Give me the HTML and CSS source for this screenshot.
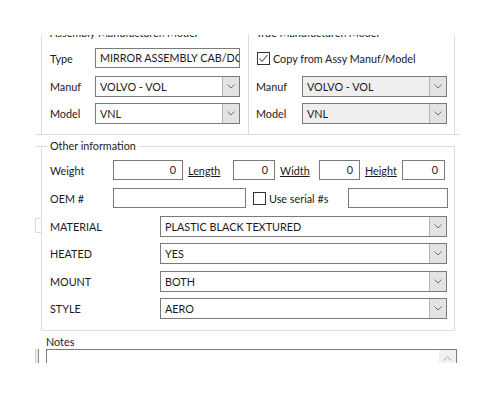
FILE: index.html
```html
<!DOCTYPE html>
<html lang="en">
<head>
    <meta charset="UTF-8">
    <title>Part details</title>
    <link rel="stylesheet" href="styles.css">
</head>
<body>

    <div class="viewport">

        <div class="toprow">
            <div class="group group-assy">
                <span class="group-title">Assembly Manufacturer/Model</span>
                <div class="row row-first">
                    <span class="label">Type</span>
                    <div class="field">MIRROR ASSEMBLY CAB/DOOR MOUNTED</div>
                </div>
                <div class="row row-combo1">
                    <span class="label">Manuf</span>
                    <div class="combo">
                        <span class="combo-value">VOLVO - VOL</span>
                        <span class="combo-btn"><svg width="8" height="5" viewBox="0 0 8 5"><polyline points="0.5,0.5 4,4 7.5,0.5" fill="none" stroke="#707070"/></svg></span>
                    </div>
                </div>
                <div class="row row-combo2">
                    <span class="label">Model</span>
                    <div class="combo">
                        <span class="combo-value">VNL</span>
                        <span class="combo-btn"><svg width="8" height="5" viewBox="0 0 8 5"><polyline points="0.5,0.5 4,4 7.5,0.5" fill="none" stroke="#707070"/></svg></span>
                    </div>
                </div>
            </div>

            <div class="group group-true">
                <span class="group-title">True Manufacturer/Model</span>
                <div class="row row-first">
                    <label class="check">
                        <svg width="13" height="13" viewBox="0 0 13 13"><rect x="0.5" y="0.5" width="12" height="12" fill="#fff" stroke="#333"/><polyline points="2.5,6.5 5,9.5 10.5,3" fill="none" stroke="#333"/></svg>
                        <span>Copy from Assy Manuf/Model</span>
                    </label>
                </div>
                <div class="row row-combo1">
                    <span class="label label-true">Manuf</span>
                    <div class="combo combo-locked">
                        <span class="combo-value">VOLVO - VOL</span>
                        <span class="combo-btn"><svg width="8" height="5" viewBox="0 0 8 5"><polyline points="0.5,0.5 4,4 7.5,0.5" fill="none" stroke="#707070"/></svg></span>
                    </div>
                </div>
                <div class="row row-combo2">
                    <span class="label label-true">Model</span>
                    <div class="combo combo-locked">
                        <span class="combo-value">VNL</span>
                        <span class="combo-btn"><svg width="8" height="5" viewBox="0 0 8 5"><polyline points="0.5,0.5 4,4 7.5,0.5" fill="none" stroke="#707070"/></svg></span>
                    </div>
                </div>
            </div>
        </div>

        <div class="other">
            <div class="gutter">
                <div class="bracket"></div>
            </div>
            <div class="group group-other">
                <span class="group-title">Other information</span>

                <div class="row row-weight">
                    <span class="label label-wide">Weight</span>
                    <div class="field num w-weight">0</div>
                    <span class="link l-length">Length</span>
                    <div class="field num w-length">0</div>
                    <span class="link l-width">Width</span>
                    <div class="field num w-width">0</div>
                    <span class="link l-height">Height</span>
                    <div class="field num w-height">0</div>
                </div>

                <div class="row row-oem">
                    <span class="label label-wide">OEM #</span>
                    <div class="field w-oem"></div>
                    <label class="check serial">
                        <svg width="13" height="13" viewBox="0 0 13 13"><rect x="0.5" y="0.5" width="12" height="12" fill="#fff" stroke="#333"/></svg>
                        <span>Use serial #s</span>
                    </label>
                    <div class="field w-serial"></div>
                </div>

                <div class="row row-attr1">
                    <span class="label label-attr">MATERIAL</span>
                    <div class="combo combo-attr">
                        <span class="combo-value">PLASTIC BLACK TEXTURED</span>
                        <span class="combo-btn"><svg width="8" height="5" viewBox="0 0 8 5"><polyline points="0.5,0.5 4,4 7.5,0.5" fill="none" stroke="#707070"/></svg></span>
                    </div>
                </div>
                <div class="row row-attr">
                    <span class="label label-attr">HEATED</span>
                    <div class="combo combo-attr">
                        <span class="combo-value">YES</span>
                        <span class="combo-btn"><svg width="8" height="5" viewBox="0 0 8 5"><polyline points="0.5,0.5 4,4 7.5,0.5" fill="none" stroke="#707070"/></svg></span>
                    </div>
                </div>
                <div class="row row-attr row-attr3">
                    <span class="label label-attr">MOUNT</span>
                    <div class="combo combo-attr">
                        <span class="combo-value">BOTH</span>
                        <span class="combo-btn"><svg width="8" height="5" viewBox="0 0 8 5"><polyline points="0.5,0.5 4,4 7.5,0.5" fill="none" stroke="#707070"/></svg></span>
                    </div>
                </div>
                <div class="row row-attr">
                    <span class="label label-attr">STYLE</span>
                    <div class="combo combo-attr">
                        <span class="combo-value">AERO</span>
                        <span class="combo-btn"><svg width="8" height="5" viewBox="0 0 8 5"><polyline points="0.5,0.5 4,4 7.5,0.5" fill="none" stroke="#707070"/></svg></span>
                    </div>
                </div>
            </div>
        </div>

        <div class="notes-row">
            <div class="frag"></div>
            <div class="notes">
                <div class="notes-label">Notes</div>
                <div class="notes-box">
                    <span class="scroll-up"><svg width="9" height="5" viewBox="0 0 9 5"><polyline points="0.5,4.5 4.5,0.8 8.5,4.5" fill="none" stroke="#a8a8a8"/></svg></span>
                </div>
            </div>
        </div>

    </div>

</body>
</html>
```

FILE: styles.css
```css
/* form window */
body {
    margin: 0;
    background: #fff;
    font-family: Lato, "Noto Sans", sans-serif;
    font-size: 10.8px;
    color: #1a1a1a;
}

.viewport {
    margin: 35px 0 0 35px;
    width: 425px;
    height: 328px;
    overflow: hidden;
}

/* group boxes */
.group {
    border: 1px solid #dcdcdc;
    box-sizing: border-box;
}

.group-title {
    display: block;
    width: fit-content;
    margin: -9px 0 0 -2px;
    padding: 0 2px;
    line-height: 16px;
    background: #fff;
    white-space: nowrap;
}

.toprow {
    display: flex;
    margin-top: -2px;
    padding-left: 6px;
    border-bottom: 1px solid #dcdcdc;
}

.group-assy {
    width: 208px;
    border-bottom: none;
    padding: 0 8px 10px 8px;
}

.group-true {
    width: 206px;
    border-left: none;
    border-bottom: none;
    padding: 0 7px 10px 7px;
}

.other {
    display: flex;
    margin-top: 11px;
}

.gutter {
    width: 6px;
    border-top: 1px solid #dcdcdc;
    box-sizing: border-box;
}

.bracket {
    margin-top: 71px;
    height: 13px;
    border: 1px solid #dcdcdc;
    border-right: none;
}

.group-other {
    width: 414px;
    padding: 0 7px 11px 8px;
}

/* rows */
.row {
    display: flex;
    align-items: center;
    height: 21px;
}

.row-first { margin-top: 7px; height: 20px; }
.row-combo1 { margin-top: 8px; }
.row-combo2 { margin-top: 6px; }
.row-weight { margin-top: 6px; height: 20px; }
.row-oem { margin-top: 8px; height: 20px; }
.row-attr1 { margin-top: 8px; }
.row-attr { margin-top: 6px; }
.row-attr3 { margin-top: 7px; }

.label {
    width: 45px;
    flex: none;
}

.label-true { width: 46px; }
.label-wide { width: 63px; }
.label-attr { width: 110px; }

/* text boxes */
.field {
    box-sizing: border-box;
    width: 145px;
    height: 20px;
    line-height: 18px;
    border: 1px solid #7a7a7a;
    padding: 0 4px;
    white-space: nowrap;
    overflow: hidden;
    background: #fff;
    flex: none;
}

.num {
    text-align: right;
    padding-right: 6px;
}

.w-weight { width: 70px; }
.w-length { width: 42px; }
.w-width { width: 41px; }
.w-height { width: 43px; }
.w-oem { width: 133px; }
.w-serial { width: 100px; }

.link {
    text-decoration: underline;
    margin-left: 5px;
    flex: none;
}

.l-length { width: 45px; }
.l-width { width: 39px; }
.l-height { width: 37px; }

/* check boxes */
.check {
    display: flex;
    align-items: center;
    gap: 3px;
    white-space: nowrap;
}

.check svg {
    flex: none;
}

.group-true .check {
    margin-left: 1px;
}

.serial {
    width: 95px;
    margin-left: 7px;
    flex: none;
}

/* combo boxes */
.combo {
    box-sizing: border-box;
    display: flex;
    width: 145px;
    height: 21px;
    border: 1px solid #7a7a7a;
    background: #fff;
    flex: none;
}

.combo-locked {
    background: #efefef;
}

.combo-attr {
    width: 287px;
}

.combo-value {
    flex: 1;
    padding-left: 4px;
    line-height: 19px;
    white-space: nowrap;
    overflow: hidden;
}

.combo-btn {
    width: 16px;
    border-left: 1px solid #b4b4b4;
    background: #e3e3e3;
    display: flex;
    align-items: center;
    justify-content: center;
}

/* notes */
.notes-row {
    display: flex;
    margin-top: 3px;
}

.frag {
    box-sizing: border-box;
    width: 4px;
    height: 16px;
    margin-top: 15px;
    border-left: 1px solid #d0d0d0;
    border-right: 1px solid #8a8a8a;
    background: #ececec;
}

.notes {
    margin-left: 7px;
}

.notes-label {
    line-height: 15px;
}

.notes-box {
    box-sizing: border-box;
    width: 411px;
    height: 40px;
    border: 1px solid #7a7a7a;
    display: flex;
    justify-content: flex-end;
    align-items: flex-start;
}

.scroll-up {
    width: 17px;
    height: 16px;
    background: #f0f0f0;
    display: flex;
    align-items: center;
    justify-content: center;
}
```
